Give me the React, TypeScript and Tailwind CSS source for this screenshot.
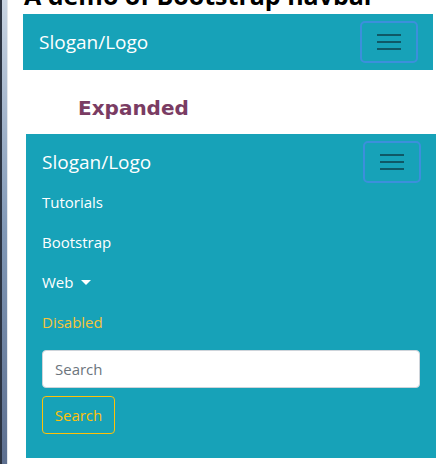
import { ReactNode } from "react";

function Toggler() {
  return (
    <button
      type="button"
      className="flex h-[42px] w-[58px] flex-col items-center justify-center gap-[5px] rounded-[5px] border-2 border-[#3c8fdc]"
    >
      <span className="h-[2px] w-[24px] bg-[#0f5866]" />
      <span className="h-[2px] w-[24px] bg-[#0f5866]" />
      <span className="h-[2px] w-[24px] bg-[#0f5866]" />
    </button>
  );
}

function NavLink({ children, disabled }: { children: ReactNode; disabled?: boolean }) {
  return (
    <li
      className={
        disabled
          ? "flex h-[40px] items-center text-[15px] text-[#f7c43a]"
          : "flex h-[40px] items-center text-[15px] text-white"
      }
    >
      {children}
    </li>
  );
}

export default function App() {
  return (
    <div className="flex h-[464px] w-[440px] overflow-hidden bg-white font-['Open_Sans',sans-serif]">
      <div className="flex w-[8px] shrink-0">
        <div className="w-[2px] bg-[#2c3442]" />
        <div className="w-[5px] bg-gradient-to-b from-[#c9d4e2] via-[#8198b6] to-[#5d6f8f]" />
        <div className="w-[1px] bg-[#e3e7ec]" />
      </div>
      <div className="flex flex-1 flex-col">
        <h1 className="mt-[-20px] ml-[16px] whitespace-nowrap text-[25px] font-bold leading-[30px] text-black">
          A demo of Bootstrap navbar
        </h1>

        <nav className="mt-[4px] ml-[15px] flex h-[56px] w-[410px] items-center justify-between bg-[#17a2b8] pl-[16px] pr-[15px]">
          <span className="text-[19px] text-white">Slogan/Logo</span>
          <Toggler />
        </nav>

        <h2 className="mt-[26px] ml-[70px] font-['DejaVu_Sans',sans-serif] text-[20px] font-bold leading-[24px] text-[#7a3c63]">
          Expanded
        </h2>

        <nav className="mt-[14px] ml-[18px] flex h-[324px] w-[410px] flex-col bg-[#17a2b8] pl-[16px] pr-[15px] pt-[7px]">
          <div className="flex items-center justify-between">
            <span className="text-[19px] text-white">Slogan/Logo</span>
            <Toggler />
          </div>
          <ul className="mt-[-1px] flex flex-col">
            <NavLink>Tutorials</NavLink>
            <NavLink>Bootstrap</NavLink>
            <NavLink>
              Web
              <span className="ml-[8px] h-0 w-0 border-x-[5px] border-t-[5px] border-x-transparent border-t-white" />
            </NavLink>
            <NavLink disabled>Disabled</NavLink>
          </ul>
          <input
            type="text"
            placeholder="Search"
            className="mt-[8px] h-[38px] w-[378px] rounded-[4px] border border-[#ced4da] bg-white px-[12px] text-[15px] text-[#495057] placeholder:text-[#6c757d]"
          />
          <button
            type="button"
            className="mt-[8px] h-[38px] w-[73px] rounded-[4px] border border-[#ffc107] text-[15px] text-[#ffc107]"
          >
            Search
          </button>
        </nav>
      </div>
    </div>
  );
}
